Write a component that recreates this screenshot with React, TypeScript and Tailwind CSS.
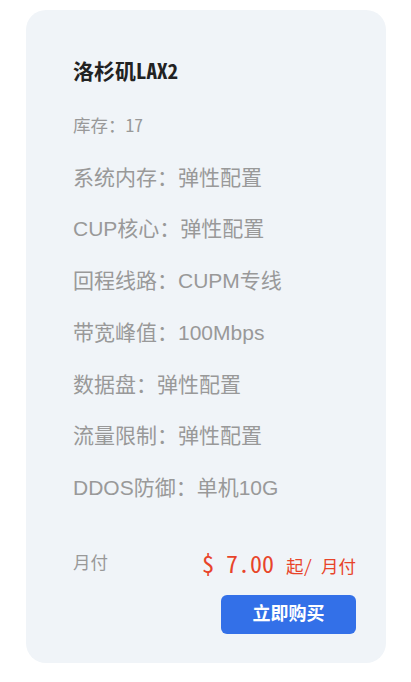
const specs = [
  { label: '系统内存', value: '弹性配置' },
  { label: 'CUP核心', value: '弹性配置' },
  { label: '回程线路', value: 'CUPM专线' },
  { label: '带宽峰值', value: '100Mbps' },
  { label: '数据盘', value: '弹性配置' },
  { label: '流量限制', value: '弹性配置' },
  { label: 'DDOS防御', value: '单机10G' },
];

const mono = "font-['Noto_Sans_Mono_CJK_SC','Noto_Sans_CJK_SC',monospace]";
const sans = "font-['Liberation_Sans','Noto_Sans_CJK_SC',sans-serif]";

export default function App() {
  return (
    <div className="min-h-[682px] w-[411px] bg-white pt-[10px] pl-[26px]">
      <div className="flex h-[653px] w-[360px] flex-col rounded-[20px] bg-[#f0f4f8] pt-[45px] pr-[30px] pl-[47px]">
        <h3 className={`${mono} text-[21px] leading-[30px] font-bold text-[#222]`}>洛杉矶LAX2</h3>
        <p className={`${mono} mt-[27px] text-[17.5px] leading-[26px] text-[#999]`}>库存：17</p>
        <ul className={`${sans} mt-[24.5px] flex flex-col gap-[21.8px] text-[21px] leading-[30px] text-[#999]`}>
          {specs.map((s) => (
            <li key={s.label}>
              {s.label}：{s.value}
            </li>
          ))}
        </ul>
        <div className="mt-[42.7px] flex h-[34px] items-center justify-between">
          <span className={`${sans} text-[17.5px] text-[#999]`}>月付</span>
          <span className={`${mono} flex items-baseline text-[#e8442a]`}>
            <span className="text-[24px]">$ 7.00</span>
            <span className="ml-[12px] text-[17.5px]">起/ 月付</span>
          </span>
        </div>
        <div className="mt-[15.5px] flex justify-end">
          <button className={`${sans} h-[39px] w-[135px] rounded-[6px] bg-[#3370e8] text-[18px] font-bold text-white`}>
            立即购买
          </button>
        </div>
      </div>
    </div>
  );
}
